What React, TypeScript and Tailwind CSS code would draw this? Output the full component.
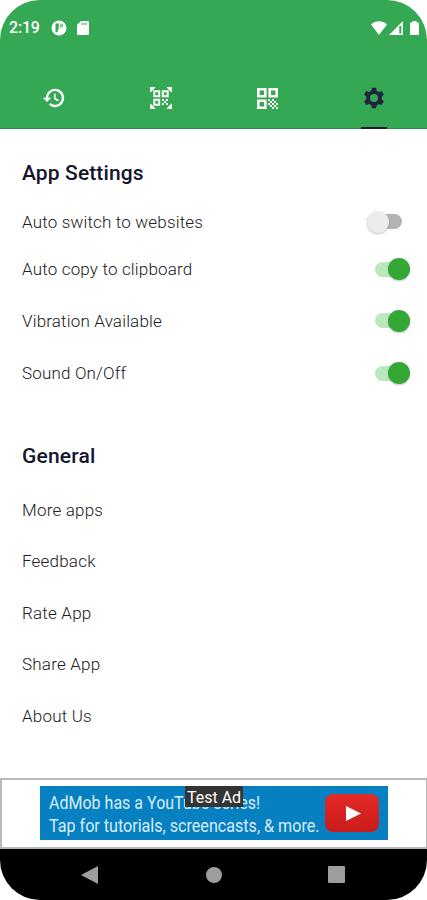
import { useState } from "react";

const generalItems = ["More apps", "Feedback", "Rate App", "Share App", "About Us"];

function HistoryIcon() {
  return (
    <svg width="24" height="24" viewBox="0 0 24 24" fill="none">
      <path d="M5 12a8 8 0 1 1 2.600 5.900" stroke="#fff" strokeWidth="2.300" />
      <path d="M.8 11.700h8.400L5 16z" fill="#fff" />
      <path d="M12.800 7.800v4.700l3.700 2.200" stroke="#fff" strokeWidth="1.700" />
    </svg>
  );
}

function ScanIcon() {
  return (
    <svg width="22" height="22" viewBox="0 0 22 22" fill="none">
      <path d="M0 0h5.500L3.500 2.800h-.7v.7L0 5.500zM22 0h-5.500l2 2.800h.7v.7l2.800 2zM0 22h5.500l-2-2.800h-.7v-.7L0 16.500zM22 22h-5.500l2-2.800h.7v-.7l2.800-2z" fill="#fff" />
      <path d="M4.300 4.300h4.900v4.900H4.300zM12.800 4.300h4.900v4.900h-4.900zM4.300 12.800h4.900v4.900H4.300z" stroke="#fff" strokeWidth="2" />
      <path d="M12 12h2v2h-2zM14 14h2v2h-2zM16 12h2v2h-2zM12 16h2v2h-2zM16 16h2v2h-2z" fill="#fff" />
    </svg>
  );
}

function QrIcon() {
  return (
    <svg width="21" height="21" viewBox="0 0 21 21" fill="none">
      <path d="M1.300 1.300h7v7h-7zM12.700 1.300h7v7h-7zM1.300 12.700h7v7h-7z" stroke="#fff" strokeWidth="2.600" />
      <path
        d="M11 11h2v2h-2zM15 11h2v2h-2zM13 13h2v2h-2zM17 13h2v2h-2zM11 15h2v2h-2zM15 15h2v2h-2zM19 15h2v2h-2zM13 17h2v2h-2zM17 17h2v2h-2zM15 19h2v2h-2zM19 19h2v2h-2z"
        fill="#fff"
      />
    </svg>
  );
}

// Six teeth around a ring with an open centre
function GearIcon() {
  return (
    <svg width="22" height="22" viewBox="0 0 22 22" fill="none">
      <circle cx="11" cy="11" r="5.900" stroke="currentColor" strokeWidth="3.800" />
      <g fill="currentColor">
        {[0, 60, 120, 180, 240, 300].map((angle) => (
          <path key={angle} d="M8.900.8h4.200l.8 4.200H8.100z" transform={`rotate(${angle} 11 11)`} />
        ))}
      </g>
    </svg>
  );
}

function StatusBar() {
  return (
    <div className="flex h-14 items-center pr-2 pl-[9px] text-white">
      <span className="w-[30px] text-[16px] leading-none font-medium tracking-[-0.2px]">2:19</span>
      <svg className="ml-3" width="16" height="16" viewBox="0 0 16 16">
        <circle cx="8" cy="8" r="7.500" fill="#fff" />
        <path d="M4.500 3.500h3.300v5.800H6.800v3H4.500zM9.300 3.500h1v4.200h-1zM10.800 3.700a2 2 0 0 1 0 3.600z" fill="#34a853" />
      </svg>
      <svg className="ml-[10px]" width="12" height="14" viewBox="0 0 12 14">
        <path d="M4 0h7a1 1 0 0 1 1 1v12a1 1 0 0 1-1 1H1a1 1 0 0 1-1-1V4z" fill="#fff" />
        <path d="M4.500 2h1v2h-1zM6.500 2h1v2h-1zM8.500 2h1v2h-1z" fill="#34a853" />
      </svg>
      <svg className="ml-auto" width="16" height="14" viewBox="0 0 16 14">
        <path d="M0 3.500C4.500-.8 11.500-.8 16 3.500L8 14z" fill="#fff" />
      </svg>
      <svg className="ml-[2px]" width="14" height="14" viewBox="0 0 14 14">
        <path d="M14 0v14H0z" fill="#fff" />
        <path d="M10.300 5h2v7.500h-2z" fill="#34a853" />
      </svg>
      <svg className="ml-[7px]" width="9" height="14" viewBox="0 0 9 14">
        <path d="M2.500 0h4v1.500H9V14H0V1.500h2.500z" fill="#fff" />
      </svg>
    </div>
  );
}

function Tabs() {
  return (
    <nav className="grid h-[73px] grid-cols-4 border-b border-[#249348] text-white">
      <button className="flex items-center justify-center pt-[12px] pl-px"><HistoryIcon /></button>
      <button className="flex items-center justify-center pt-[12px] pl-[2px]"><ScanIcon /></button>
      <button className="flex items-center justify-center pt-[12px] pl-[2px]"><QrIcon /></button>
      <button className="relative flex items-center justify-center pt-[12px] pl-px text-[#20253f]">
        <GearIcon />
        <span className="absolute -bottom-px left-1/2 h-[2px] w-[26px] -translate-x-1/2 bg-[#1b1b35]" />
      </button>
    </nav>
  );
}

function Toggle({ on, onClick }: { on: boolean; onClick: () => void }) {
  return (
    <button
      role="switch"
      aria-checked={on}
      onClick={onClick}
      className={`flex h-[22px] items-center ${on ? "w-[36px]" : "mr-2 mb-px w-[35px]"}`}
    >
      <span className={`flex h-[15px] w-full items-center rounded-full ${on ? "ml-px justify-end bg-[#bce8be]" : "bg-[#b3b3b3]"}`}>
        <span className={`size-[22px] shrink-0 rounded-full shadow-[0_1px_2px_rgba(0,0,0,0.25)] ${on ? "bg-[#34a835]" : "bg-[#ececec]"}`} />
      </span>
    </button>
  );
}

function AdBanner() {
  return (
    <div className="flex h-[71px] justify-center border-2 border-r border-[#b9b9b9] pt-[6px]">
      <div className="relative flex h-[54px] w-[348px] bg-[#0780c1]">
        <div className="w-[285px] pt-[5px] pl-[9px] text-[18px] leading-[23px] whitespace-nowrap text-[#d8edfa]">
          <p className="w-max origin-left scale-x-[0.89]">AdMob has a YouTube series!</p>
          <p className="w-max origin-left scale-x-[0.895]">Tap for tutorials, screencasts, &amp; more.</p>
        </div>
        <div className="mt-[8px] flex h-[38px] w-[54px] items-center justify-center rounded-[8px] bg-gradient-to-b from-[#e32a27] to-[#c91c1b] pl-[3px]">
          <svg width="15" height="15" viewBox="0 0 15 15">
            <path d="M0 0l15 7.500L0 15z" fill="#fff" />
          </svg>
        </div>
        <span className="absolute top-0 left-[145px] flex h-[21px] w-[58px] items-center justify-center bg-[#343434] pt-[3px] text-[16px] whitespace-nowrap text-white">
          Test Ad
        </span>
      </div>
    </div>
  );
}

export default function App() {
  const [settings, setSettings] = useState([
    { label: "Auto switch to websites", on: false, row: "h-[44px]" },
    { label: "Auto copy to clipboard", on: true, row: "h-[50px]" },
    { label: "Vibration Available", on: true, row: "h-[53px]" },
    { label: "Sound On/Off", on: true, row: "h-[52px]" },
  ]);

  const toggle = (label: string) =>
    setSettings(settings.map((s) => (s.label === label ? { ...s, on: !s.on } : s)));

  return (
    <div className="h-[900px] w-[427px] bg-white font-['Roboto',sans-serif]">
      <div className="flex h-full flex-col overflow-hidden rounded-[40px] bg-white">
        <header className="h-[129px] shrink-0 bg-[#34a853]">
          <StatusBar />
          <Tabs />
        </header>

        <main className="flex-1 pr-[17px] pl-[22px] text-[#202020]">
          <h2 className="mt-[30px] h-[41px] text-[21px] leading-[28px] font-medium tracking-[0.12px] text-[#15152d]">App Settings</h2>
          {settings.map((s) => (
            <div key={s.label} className={`flex items-center justify-between ${s.row}`}>
              <span className="pt-[2px] text-[17px] font-light tracking-[0.17px]">{s.label}</span>
              <Toggle on={s.on} onClick={() => toggle(s.label)} />
            </div>
          ))}

          <h2 className="mt-[43px] h-[43px] text-[21px] leading-[28px] font-medium tracking-[0.2px] text-[#15152d]">General</h2>
          {generalItems.map((item) => (
            <div key={item} className="flex h-[51.4px] items-center text-[17px] font-light tracking-[0.2px]">
              {item}
            </div>
          ))}
        </main>

        <AdBanner />
        <footer className="flex h-[51px] shrink-0 items-center bg-black">
          <svg className="ml-[81px]" width="17" height="18" viewBox="0 0 17 18"><path d="M17 0v18L0 9z" fill="#9d9d9d" /></svg>
          <span className="ml-[108px] size-4 rounded-full bg-[#9d9d9d]" />
          <span className="ml-[106px] size-[17px] rounded-[1px] bg-[#9d9d9d]" />
        </footer>
      </div>
    </div>
  );
}
